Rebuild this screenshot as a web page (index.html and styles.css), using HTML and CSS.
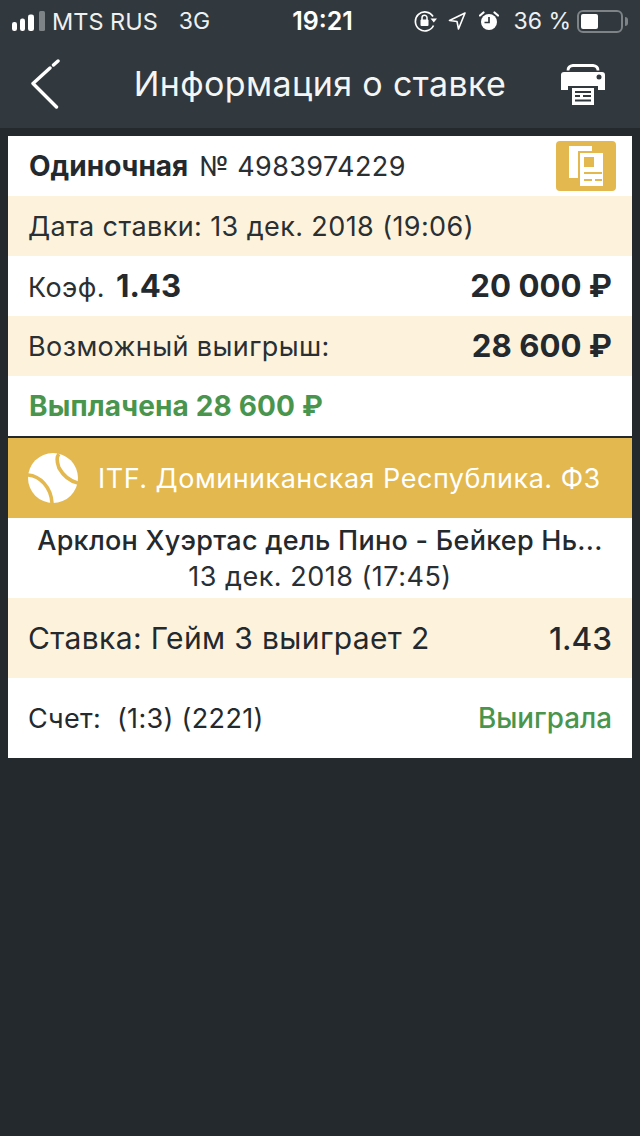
FILE: index.html
```html
<!DOCTYPE html>
<html lang="ru">
<head>
<meta charset="utf-8">
<title>Информация о ставке</title>
<link rel="stylesheet" href="styles.css">
</head>
<body>
<header class="top">
  <div class="status">
    <div class="status-left">
      <svg class="signal" width="34" height="20" viewBox="0 0 34 20"><rect x="0" y="11" width="5" height="9" rx="2.200" fill="#fff"/><rect x="8" y="7.500" width="5" height="12.500" rx="2.200" fill="#fff"/><rect x="16" y="3.500" width="6" height="16.500" rx="2.200" fill="#fff"/><rect x="27" y="0" width="6" height="20" rx="1.500" fill="#7d8387"/></svg>
      <span class="carrier">MTS RUS</span>
      <span class="net">3G</span>
    </div>
    <div class="clock">19:21</div>
    <div class="status-right">
      <svg width="24" height="22" viewBox="0 0 24 22" class="ic-lock"><path d="M19.500 15.500A9.500 9.500 0 1 1 19 6.500" fill="none" stroke="#fff" stroke-width="1.700"/><path d="M16.500 8.500h6.500l-3.200 4z" fill="#fff"/><rect x="6.500" y="9.500" width="8" height="6.500" rx="1" fill="#fff"/><path d="M8 10V7.800a2.500 2.500 0 0 1 5 0V10" fill="none" stroke="#fff" stroke-width="1.500"/></svg>
      <svg width="18" height="18" viewBox="0 0 18 18" class="ic-loc"><path d="M17 1 1.500 8.500 9 9.500 10.500 17z" fill="none" stroke="#fff" stroke-width="1.600" stroke-linejoin="round"/></svg>
      <svg width="20" height="20" viewBox="0 0 20 20" class="ic-alarm"><circle cx="10" cy="11" r="8" fill="#fff"/><path d="M10 6v5.500H5.500" fill="none" stroke="#31383e" stroke-width="1.700"/><path d="M1 4.500 4.500 1.500M19 4.500 15.500 1.500" stroke="#fff" stroke-width="2.200" stroke-linecap="round"/></svg>
      <span class="pct">36 %</span>
      <div class="battery"><div class="battery-box"><div class="battery-fill"></div></div><div class="battery-tip"></div></div>
    </div>
  </div>
  <div class="nav">
    <svg class="back" width="30" height="52" viewBox="0 0 30 52"><path d="M26.500 48 3 24.500 20 9M23.500 6 28 2" fill="none" stroke="#fff" stroke-width="3.400" stroke-linecap="round" stroke-linejoin="round"/></svg>
    <h1 class="title">Информация о ставке</h1>
    <svg class="print" width="46" height="44" viewBox="0 0 46 44"><path d="M8 7.500Q8 3 13 2.500H33Q38 3 38 7.500" fill="none" stroke="#fff" stroke-width="2.800"/><path d="M4 9H42Q45 9 45 12V27H38V23H8V27H1V12Q1 9 4 9Z" fill="#fff"/><circle cx="39" cy="14" r="2.500" fill="#31383e"/><path d="M12 25H34V42H12Z" fill="#fff"/><path d="M15 29H31M23 33H31M15 33H20M15 37.500H31" stroke="#31383e" stroke-width="2"/></svg>
  </div>
</header>
<main class="card">
  <div class="row white">
    <div><strong class="kind">Одиночная</strong><span class="num">№ 4983974229</span></div>
    <div class="copy">
      <svg width="60" height="50" viewBox="0 0 60 50"><path d="M13 5H36V37H13Z" fill="#fff"/><path d="M22 10H49V47H22Z" fill="#e3b84e"/><path d="M24 12H47V45H24Z" fill="#fff"/><rect x="28" y="16" width="10" height="10" fill="#e3b84e"/><path d="M28 32H46M28 39H36M39 39H46" stroke="#e3b84e" stroke-width="2"/></svg>
    </div>
  </div>
  <div class="row cream"><span class="txt">Дата ставки: 13 дек. 2018 (19:06)</span></div>
  <div class="row white">
    <div class="coef"><span class="txt">Коэф.</span><b class="big">1.43</b></div>
    <b class="big">20 000 ₽</b>
  </div>
  <div class="row cream"><span class="txt">Возможный выигрыш:</span><b class="big">28 600 ₽</b></div>
  <div class="row white paid">Выплачена 28 600 ₽</div>
  <div class="league">
    <svg width="50" height="50" viewBox="0 0 50 50"><circle cx="25" cy="25" r="25" fill="#fff"/><path d="M0 22C12 23 23 34 24 50M31 1C27 5 30 11 31 15 35 22 41 28 50 30" fill="none" stroke="#e3b84e" stroke-width="3.600"/></svg>
    <span>ITF. Доминиканская Республика. Ф3</span>
  </div>
  <div class="match">
    <div class="teams">Арклон Хуэртас дель Пино - Бейкер Нь...</div>
    <div class="when">13 дек. 2018 (17:45)</div>
  </div>
  <div class="row cream tall"><span class="bet">Ставка: Гейм 3 выиграет 2</span><span class="odd">1.43</span></div>
  <div class="row white tall"><span class="score">Счет:&nbsp; (1:3) (2221)</span><span class="won">Выиграла</span></div>
</main>
</body>
</html>
```

FILE: styles.css
```css
* { box-sizing: border-box; }
html, body { margin: 0; padding: 0; }
body {
  width: 640px;
  height: 1136px;
  overflow: hidden;
  background: #24292e;
  color: #24292e;
  font-family: Inter, "Liberation Sans", sans-serif;
}
.top { height: 128px; background: #31383e; color: #fff; }
.status {
  height: 42px;
  padding: 0 12px;
  display: grid;
  grid-template-columns: 1fr auto 1fr;
  align-items: center;
}
.status-left { display: flex; align-items: center; }
.signal { margin-right: 6px; }
.carrier { font-size: 23.500px; color: #eef0f1; }
.net { margin-left: 21px; font-size: 23px; color: #eef0f1; }
.clock { font-weight: 600; font-size: 25px; margin-left: 5px; }
.status-right { display: flex; align-items: center; justify-content: flex-end; }
.ic-lock { margin-right: 10px; }
.ic-loc { margin-right: 13px; }
.ic-alarm { margin-right: 14px; }
.pct { font-size: 23px; color: #eef0f1; margin-right: 6px; }
.battery { display: flex; align-items: center; }
.battery-box {
  width: 46px;
  height: 23px;
  border: 2px solid #7d8387;
  border-radius: 6px;
  padding: 2px;
}
.battery-fill { width: 17px; height: 15px; background: #fff; border-radius: 2px; }
.battery-tip { width: 3px; height: 9px; background: #7d8387; border-radius: 0 3px 3px 0; margin-left: 2px; }
.nav {
  height: 86px;
  padding: 0 34px 0 30px;
  display: flex;
  align-items: center;
  justify-content: space-between;
}
.title { margin: 0 0 3px 20px; font-size: 34px; letter-spacing: 0.37px; font-weight: 400; color: #f4f5f5; }
.card { margin: 8px 8px 0; background: #fff; }
.row {
  height: 60px;
  padding: 0 20px 0 21px;
  display: flex;
  align-items: center;
  justify-content: space-between;
}
.white { background: #fff; }
.cream { background: #fdf3dd; }
.tall { height: 80px; }
.kind { font-weight: 700; font-size: 28px; margin-right: 11px; }
.num { font-size: 27px; letter-spacing: 0.4px; color: #2a2f33; }
.txt { font-size: 27px; letter-spacing: 0.4px; color: #2a2f33; margin-left: -1px; }
.copy {
  width: 60px;
  height: 50px;
  margin-right: -4px;
  background: #e3b84e;
  border-radius: 4px;
  display: flex;
}
.coef { display: flex; align-items: baseline; gap: 11px; }
.big { font-size: 31.200px; font-weight: 700; }
.paid { color: #4a954d; font-weight: 700; font-size: 28px; letter-spacing: 0.15px; }
.league {
  height: 82px;
  border-top: 2px solid #24292e;
  background: #e3b84e;
  color: #fff;
  padding: 0 20px;
  display: flex;
  align-items: center;
  gap: 20px;
  font-size: 27px;
  letter-spacing: 0.5px;
}
.match {
  height: 80px;
  padding-top: 2px;
  display: flex;
  flex-direction: column;
  align-items: center;
  justify-content: center;
  line-height: 36px;
}
.teams { font-weight: 500; font-size: 27px; letter-spacing: 0.27px; }
.when { color: #2a2f33; font-size: 27px; letter-spacing: 0.5px; }
.bet { font-size: 30px; letter-spacing: 0.36px; margin-left: -1px; }
.odd { font-size: 31.500px; font-weight: 500; }
.score { font-size: 27px; letter-spacing: 0.33px; margin-left: -1px; }
.won { color: #4a954d; font-size: 27.800px; font-weight: 500; }
```
